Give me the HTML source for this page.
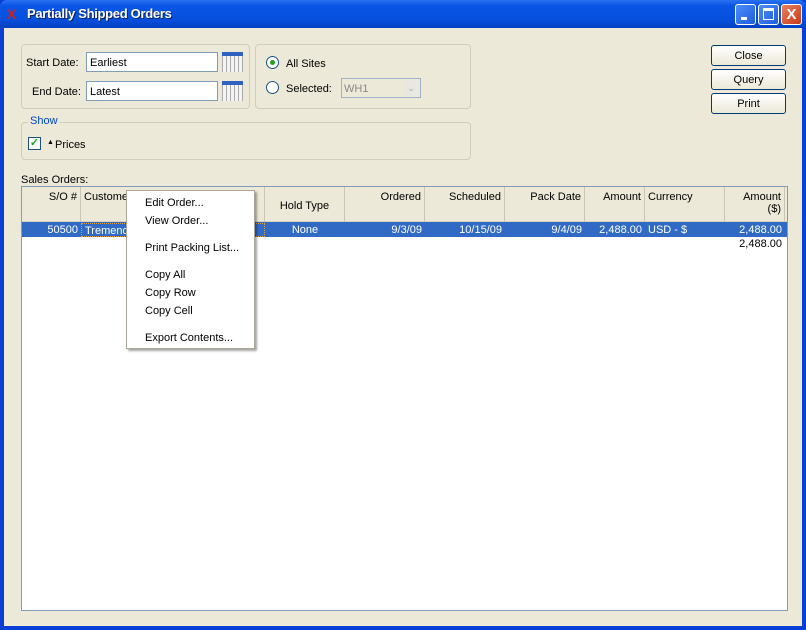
<!DOCTYPE html>
<html><head><style>
*{box-sizing:border-box;margin:0;padding:0}
body{width:806px;height:630px;overflow:hidden;font-family:"Liberation Sans",sans-serif;font-size:11px;color:#000;background:#0a3fd6;position:relative}
.a{position:absolute}
#title{left:0;top:0;width:806px;height:28px;background:linear-gradient(#2b72f0,#0a55e6 20%,#0650dd 70%,#0440c0);border-radius:7px 7px 0 0}
#client{left:4px;top:28px;width:798px;height:598px;background:#ece9d8}
.tb{top:4px;width:21px;height:21px;border:1px solid #fff;border-radius:3px;background:linear-gradient(135deg,#4d8cf7,#1f5de0)}
.grp{border:1px solid #d0cdb8;border-radius:4px}
.inp{background:#fff;border:1px solid #7f9db9;height:20px;padding:4px 3px 2px;font-size:11px}
.btn{left:711px;width:75px;height:21px;border:1px solid #003c74;border-radius:3px;background:linear-gradient(#fff,#ece9d8);text-align:center;line-height:20px}
.cal{width:21px;height:20px;background:repeating-linear-gradient(90deg,#aaa 0 1px,#f4f4f4 1px 4px),#ddd;border-top:4px solid #3060c0}
.rad{width:13px;height:13px;border:1px solid #1c5180;border-radius:50%;background:#fff}
.hd{top:187px;height:35px;border-right:1px solid #c9c6b5;padding:4px 3px}
.cell{top:223px;height:14px;line-height:15px;color:#fff;padding:0 3px}
.mi{left:145px}
.sep{left:129px;width:123px;height:1px;background:#aca899;border-bottom:1px solid #fff}
</style></head><body>
<div class="a" id="title"></div>
<div class="a" style="left:7px;top:6px;color:#d02020;font-weight:bold;font-size:14px">X</div>
<div class="a" style="left:27px;top:6px;color:#fff;font-weight:bold;font-size:13px;letter-spacing:-0.3px;text-shadow:1px 1px #0a1f6a">Partially Shipped Orders</div>
<div class="a tb" style="left:735px"><div class="a" style="left:5px;top:12px;width:6px;height:3px;background:#fff"></div></div>
<div class="a tb" style="left:758px"><div class="a" style="left:4px;top:3px;width:11px;height:12px;border:1px solid #fff;border-top-width:3px"></div></div>
<div class="a tb" style="left:781px;background:linear-gradient(135deg,#e88060,#c83a18);color:#fff;font-weight:bold;font-size:15px;text-align:center;line-height:19px">X</div>
<div class="a" id="client"></div>

<div class="a grp" style="left:21px;top:44px;width:229px;height:65px"></div>
<div class="a" style="left:26px;top:57px">Start Date:</div>
<div class="a inp" style="left:86px;top:52px;width:132px">Earliest</div>
<div class="a cal" style="left:222px;top:52px"></div>
<div class="a" style="left:32px;top:86px">End Date:</div>
<div class="a inp" style="left:86px;top:81px;width:132px">Latest</div>
<div class="a cal" style="left:222px;top:81px"></div>

<div class="a grp" style="left:255px;top:44px;width:216px;height:65px"></div>
<div class="a rad" style="left:266px;top:56px"><div class="a" style="left:3px;top:3px;width:5px;height:5px;border-radius:50%;background:#21a121"></div></div>
<div class="a" style="left:286px;top:58px">All Sites</div>
<div class="a rad" style="left:266px;top:81px"></div>
<div class="a" style="left:286px;top:83px">Selected:</div>
<div class="a" style="left:341px;top:78px;width:80px;height:20px;border:1px solid #a0b0c8;background:#ece9d8;color:#888;padding:4px 2px 2px">WH1<div class="a" style="left:61px;top:1px;width:16px;height:16px;background:#e8e8e0;color:#aaa;font-size:9px;text-align:center;line-height:16px">&#8964;</div></div>

<div class="a grp" style="left:21px;top:122px;width:450px;height:38px"></div>
<div class="a" style="left:28px;top:115px;background:#ece9d8;color:#0046d5;padding:0 2px">Show</div>
<div class="a" style="left:28px;top:137px;width:13px;height:13px;border:1px solid #1c5180;background:#fff;color:#21a121;font-size:11px;line-height:11px;text-align:center;font-weight:bold">✓</div>
<div class="a" style="left:47px;top:139px;font-size:7px">▲</div>
<div class="a" style="left:55px;top:139px">Prices</div>

<div class="a btn" style="top:45px">Close</div>
<div class="a btn" style="top:69px">Query</div>
<div class="a btn" style="top:93px">Print</div>

<div class="a" style="left:21px;top:174px">Sales Orders:</div>
<div class="a" style="left:21px;top:186px;width:767px;height:425px;border:1px solid #7f9db9;background:#fff"></div>
<div class="a" style="left:22px;top:187px;width:765px;height:35px;background:#ece9d8;border-bottom:1px solid #d6d3c0"></div>
<div class="a hd" style="left:22px;width:59px;text-align:right">S/O #</div>
<div class="a hd" style="left:81px;width:184px">Customer</div>
<div class="a hd" style="left:265px;width:80px;text-align:center;padding-top:13px">Hold Type</div>
<div class="a hd" style="left:345px;width:80px;text-align:right">Ordered</div>
<div class="a hd" style="left:425px;width:80px;text-align:right">Scheduled</div>
<div class="a hd" style="left:505px;width:80px;text-align:right">Pack Date</div>
<div class="a hd" style="left:585px;width:60px;text-align:right">Amount</div>
<div class="a hd" style="left:645px;width:80px">Currency</div>
<div class="a hd" style="left:725px;width:60px;text-align:right">Amount<br>($)</div>
<div class="a" style="left:22px;top:222px;width:765px;height:15px;background:#316ac5"></div>
<div class="a cell" style="left:22px;width:59px;text-align:right">50500</div>
<div class="a cell" style="left:81px;width:184px;border:1px dotted #e0a040">Tremend</div>
<div class="a cell" style="left:265px;width:80px;text-align:center">None</div>
<div class="a cell" style="left:345px;width:80px;text-align:right">9/3/09</div>
<div class="a cell" style="left:425px;width:80px;text-align:right">10/15/09</div>
<div class="a cell" style="left:505px;width:80px;text-align:right">9/4/09</div>
<div class="a cell" style="left:585px;width:60px;text-align:right">2,488.00</div>
<div class="a cell" style="left:645px;width:80px">USD - $</div>
<div class="a cell" style="left:725px;width:60px;text-align:right">2,488.00</div>
<div class="a" style="left:725px;top:238px;width:60px;text-align:right;padding:0 3px">2,488.00</div>

<div class="a" style="left:126px;top:190px;width:129px;height:159px;background:#fff;border:1px solid #aca899;box-shadow:2px 2px 2px rgba(0,0,0,.35)"></div>
<div class="a mi" style="top:197px">Edit Order...</div>
<div class="a mi" style="top:215px">View Order...</div>
<div class="a sep" style="top:232px"></div>
<div class="a mi" style="top:242px">Print Packing List...</div>
<div class="a sep" style="top:259px"></div>
<div class="a mi" style="top:269px">Copy All</div>
<div class="a mi" style="top:287px">Copy Row</div>
<div class="a mi" style="top:305px">Copy Cell</div>
<div class="a sep" style="top:322px"></div>
<div class="a mi" style="top:332px">Export Contents...</div>
</body></html>
